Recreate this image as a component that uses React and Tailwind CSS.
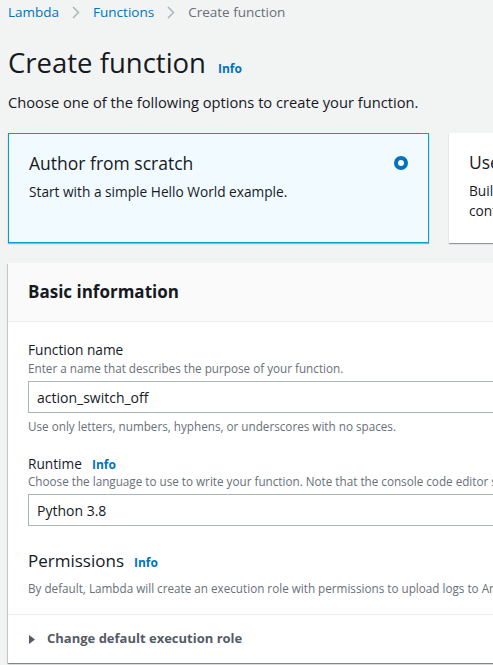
export default function App() {
  const font = { fontFamily: '"Open Sans", "Noto Sans", sans-serif' };
  return (
    <div className="min-h-[665px] w-[493px] overflow-hidden bg-[#f2f3f3] text-[#16191f]" style={font}>
      <div className="w-[700px] px-2">
        {/* breadcrumb */}
        <nav className="flex h-[25px] items-center gap-[13px] text-[13.5px]">
          <span className="text-[#0073bb]">Lambda</span>
          <Chevron />
          <span className="text-[#0073bb]">Functions</span>
          <Chevron />
          <span className="text-[#687078]">Create function</span>
        </nav>

        <div className="mt-[21px] flex items-baseline gap-3">
          <h1 className="text-[27.5px] leading-[34px]">Create function</h1>
          <span className="text-[12px] font-bold text-[#0073bb]">Info</span>
        </div>
        <p className="mt-[12px] text-[14.7px] leading-[20px]">Choose one of the following options to create your function.</p>

        {/* option cards */}
        <div className="mt-[21px] flex gap-5">
          <div className="flex h-[110px] w-[421px] shrink-0 justify-between border border-[#00a1c9] bg-[#f1faff] px-5 pt-[17px] shadow-[0_1px_1px_rgba(0,28,36,0.3)]">
            <div>
              <div className="text-[17.5px] leading-[24px]">Author from scratch</div>
              <div className="mt-[7px] text-[13.7px] leading-[20px]">Start with a simple Hello World example.</div>
            </div>
            <div className="mt-[5px] h-[14px] w-[14px] rounded-full border-[4px] border-[#0073bb] bg-white" />
          </div>
          <div className="h-[110px] w-[421px] shrink-0 bg-white px-5 pt-[17px] shadow-[0_1px_1px_rgba(0,28,36,0.3),1px_1px_1px_rgba(0,28,36,0.15)]">
            <div className="text-[17.5px] leading-[24px]">Use a blueprint</div>
            <div className="mt-[7px] text-[13.7px] leading-[20px]">Build a Lambda application from sample code and configuration presets for common use cases.</div>
          </div>
        </div>

        {/* basic information panel */}
        <div className="mt-[20px] bg-white shadow-[0_1px_1px_rgba(0,28,36,0.3),1px_1px_1px_rgba(0,28,36,0.15),-1px_1px_1px_rgba(0,28,36,0.15)]">
          <div className="flex h-[59px] items-center border-b border-[#eaeded] bg-[#fafafa] px-5">
            <h2 className="text-[17px] font-bold">Basic information</h2>
          </div>
          <div className="px-5 pt-[18px]">
            <div className="text-[13.7px] leading-[20px]">Function name</div>
            <div className="text-[11.7px] leading-[16px] text-[#687078]">Enter a name that describes the purpose of your function.</div>
            <div className="mt-[5px] flex h-[32px] items-center border border-[#aab7b8] px-2 text-[14px]">action_switch_off</div>
            <div className="mt-[5px] text-[11.7px] leading-[16px] text-[#687078]">Use only letters, numbers, hyphens, or underscores with no spaces.</div>

            <div className="mt-[20px] flex items-baseline gap-[10px]">
              <span className="text-[13.7px] leading-[20px]">Runtime</span>
              <span className="text-[12px] font-bold text-[#0073bb]">Info</span>
            </div>
            <div className="mt-[-1px] whitespace-nowrap text-[11.7px] leading-[16px] text-[#687078]">Choose the language to use to write your function. Note that the console code editor supports only Node.js, Python, and Ruby.</div>
            <div className="mt-[5px] flex h-[32px] items-center border border-[#aab7b8] px-2 text-[14px]">Python 3.8</div>

            <div className="mt-[22px] flex items-baseline gap-[10px]">
              <span className="text-[17px] leading-[26px]">Permissions</span>
              <span className="text-[12px] font-bold text-[#0073bb]">Info</span>
            </div>
            <div className="mt-[6px] whitespace-nowrap pb-[18px] text-[11.7px] leading-[16px] text-[#687078]">By default, Lambda will create an execution role with permissions to upload logs to Amazon CloudWatch Logs.</div>
          </div>
          <div className="flex h-[49px] items-center gap-[12px] border-t border-[#eaeded] pl-[21px]">
            <svg width="6" height="9" viewBox="0 0 6 9"><path d="M0 0 L6 4.5 L0 9 Z" fill="#545b64" /></svg>
            <span className="text-[13px] font-bold text-[#545b64]">Change default execution role</span>
          </div>
        </div>
      </div>
    </div>
  );
}

function Chevron() {
  return (
    <svg width="8" height="13" viewBox="0 0 8 13" fill="none">
      <path d="M1 1 L6.5 6.5 L1 12" stroke="#aab7b8" strokeWidth="1.5" />
    </svg>
  );
}
